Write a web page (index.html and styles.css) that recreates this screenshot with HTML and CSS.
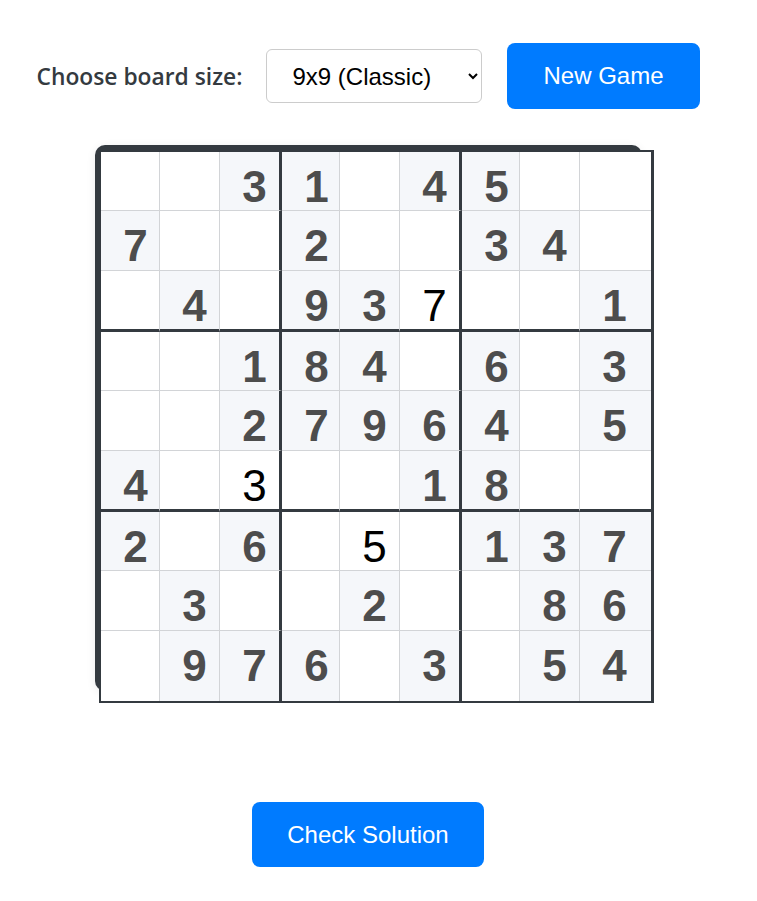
FILE: index.html
```html
<!DOCTYPE html>
<html lang="en">
<head>
  <meta charset="UTF-8" />
  <meta name="viewport" content="width=device-width, initial-scale=1" />
  <title>Sudoku</title>
  <link rel="stylesheet" href="styles.css">
</head>
<body>
  <div class="app">

    <!-- Controls -->
    <div class="controls">
      <label for="size-select" class="size-label">Choose board size:</label>
      <select id="size-select" class="size-select">
        <option value="4">4x4 (Mini)</option>
        <option value="6">6x6 (Junior)</option>
        <option value="9" selected>9x9 (Classic)</option>
      </select>
      <button class="btn btn-new" id="new-game">New Game</button>
    </div>

    <!-- Board -->
    <div class="board-wrap">
      <div class="board" id="board"></div>
    </div>

    <!-- Actions -->
    <button class="btn btn-check" id="check-btn">Check Solution</button>
  </div>

  <script>
    // 0 = empty, negative = typed in by the player
    const puzzle = [
      [0, 0, 3, 1, 0, 4, 5, 0, 0],
      [7, 0, 0, 2, 0, 0, 3, 4, 0],
      [0, 4, 0, 9, 3, -7, 0, 0, 1],
      [0, 0, 1, 8, 4, 0, 6, 0, 3],
      [0, 0, 2, 7, 9, 6, 4, 0, 5],
      [4, 0, -3, 0, 0, 1, 8, 0, 0],
      [2, 0, 6, 0, -5, 0, 1, 3, 7],
      [0, 3, 0, 0, 2, 0, 0, 8, 6],
      [0, 9, 7, 6, 0, 3, 0, 5, 4]
    ];

    const board = document.getElementById('board');

    function renderBoard() {
      board.innerHTML = '';
      puzzle.forEach((row, r) => {
        row.forEach((val, c) => {
          const cell = document.createElement('div');
          cell.classList.add('cell');
          if (c === 2 || c === 5) cell.classList.add('box-right');
          if (r === 2 || r === 5) cell.classList.add('box-bottom');
          if (c === 8) cell.classList.add('last-col');
          if (r === 8) cell.classList.add('last-row');

          if (val > 0) {
            cell.classList.add('given');
            const span = document.createElement('span');
            span.classList.add('digit');
            span.textContent = val;
            cell.appendChild(span);
          } else {
            const input = document.createElement('input');
            input.type = 'text';
            input.maxLength = 1;
            input.classList.add('digit', 'entry');
            if (val < 0) input.value = -val;
            cell.appendChild(input);
          }
          board.appendChild(cell);
        });
      });
    }

    renderBoard();
  </script>
</body>
</html>
```

FILE: styles.css
```css
* { box-sizing: border-box; }
body { margin: 0; background: #fff; font-family: "Liberation Sans", Arial, sans-serif; }

/* ===== Page ===== */
.app {
  width: 736px;
  display: flex;
  flex-direction: column;
  align-items: center;
  padding-top: 43px;
}

/* ===== Controls ===== */
.controls { display: flex; align-items: center; }
.size-label {
  font-family: "Open Sans", "Noto Sans", sans-serif;
  font-weight: 600;
  font-size: 22.8px;
  color: #343a40;
  margin-right: 24px;
}
.size-select {
  width: 216px;
  height: 54px;
  padding: 0 18px 0 21px;
  font-family: "Liberation Sans", Arial, sans-serif;
  font-size: 24px;
  color: #000;
  background: #fff;
  border: 1px solid #ccc;
  border-radius: 6px;
  margin-right: 25px;
}
.btn {
  font-family: "Liberation Sans", Arial, sans-serif;
  font-size: 24px;
  color: #fff;
  background: #007bff;
  border: none;
  border-radius: 8px;
  cursor: pointer;
}
.btn:hover { background: #0069d9; }
.btn-new { height: 66px; padding: 0 36px; }
.btn-check { height: 65px; padding: 0 35px; margin-top: 111px; }

/* ===== Board ===== */
.board-wrap {
  width: 547px;
  height: 546px;
  margin-top: 36px;
  padding: 5px 0 0 4px;
  background: #343a40;
  border-radius: 10px;
  box-shadow: 0 2px 10px rgba(0,0,0,0.08);
}
.board {
  display: grid;
  grid-template-columns: 59px 60px 62px 58px 60px 62px 58px 60px 71px;
  grid-template-rows: 59px 60px 61px 59px 60px 61px 59px 60px 70px;
  width: max-content;
  background: #fff;
  border: solid #343a40;
  border-width: 2px 3px 2px 2px;
}
.cell {
  background: #fff;
  border-right: 1px solid #d2d4d7;
  border-bottom: 1px solid #d2d4d7;
}
.cell.given { background: #f5f7fa; }
.cell.box-right { border-right: 3px solid #343a40; }
.cell.box-bottom { border-bottom: 3px solid #343a40; }
.cell.last-col { border-right: none; }
.cell.last-row { border-bottom: none; }

.digit {
  display: block;
  width: 70px;
  height: 70px;
  padding: 0;
  font-family: "Liberation Sans", Arial, sans-serif;
  font-size: 44px;
  line-height: 70px;
  text-align: center;
  color: #4d4d4d;
  font-weight: bold;
}
.entry {
  border: none;
  outline: none;
  background: transparent;
  color: #000;
  font-weight: normal;
  margin: 0;
}
```
